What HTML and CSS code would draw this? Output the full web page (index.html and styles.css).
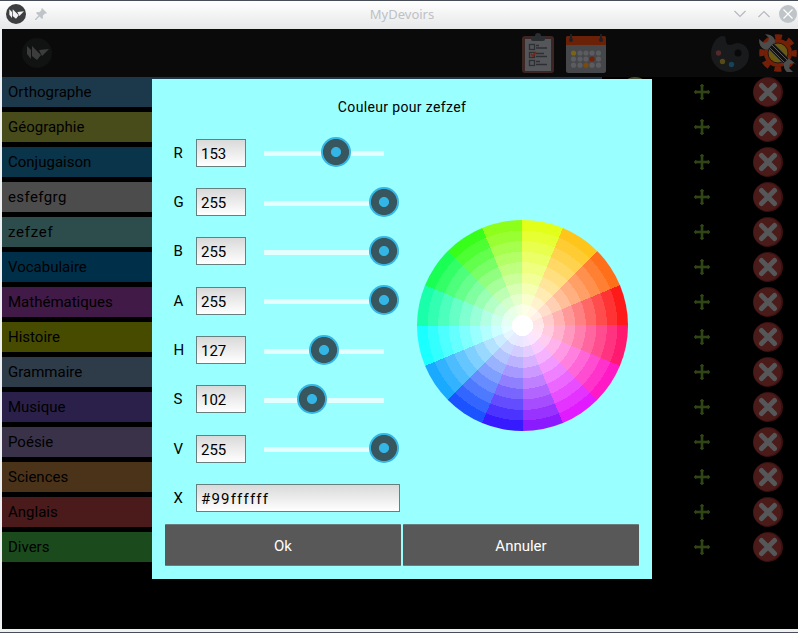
FILE: index.html
```
<!DOCTYPE html>
<html lang="fr">
<head>
<meta charset="utf-8">
<title>MyDevoirs</title>
<link rel="stylesheet" href="styles.css">
</head>
<body>
<svg class="defs" width="0" height="0">
  <defs>
    <symbol id="kivy" viewBox="0 0 30 30">
      <circle class="disc" cx="15" cy="15" r="15"/>
      <path class="bird" d="M5 8l4 4v9l-4-5zM10 8l9 9-4 5-5-4zM17 12l10-1-7 7z"/>
    </symbol>
    <symbol id="plus" viewBox="0 0 16 16">
      <path d="M7 2H6l2-2 2 2H9v5h5V6l2 2-2 2V9H9v5h1l-2 2-2-2h1V9H2v1L0 8l2-2v1h5z" fill="#304615" stroke="#304615" stroke-width=".6"/>
    </symbol>
    <symbol id="cross" viewBox="0 0 30 30">
      <circle cx="15" cy="15" r="15" fill="#3b1112"/>
      <circle cx="14.3" cy="15" r="13.9" fill="#4b1b1a"/>
      <path d="M8.500 8.500l13 13M21.500 8.500l-13 13" stroke="#555759" stroke-width="5" stroke-linecap="round"/>
    </symbol>
  </defs>
</svg>
<header class="titlebar">
  <svg class="app-icon" width="20" height="20"><use href="#kivy"/></svg>
  <svg class="pin" width="12" height="12" viewBox="0 0 12 12"><path d="M7 0l5 5-1 .7-1-.3-2.200 2.300.2 2.300-1 1L4.500 8.500 1 12H0v-1l3.500-3.500L1 5l1-1 2.300.2L6.600 2l-.3-1z" fill="#bfc4c8"/></svg>
  <h1>MyDevoirs</h1>
  <div class="controls">
    <svg width="12" height="8" viewBox="0 0 12 8"><path d="M.5 1L6 6.500 11.500 1"/></svg>
    <svg width="12" height="8" viewBox="0 0 12 8"><path d="M.5 7L6 1.500 11.500 7"/></svg>
    <svg width="18" height="18" viewBox="0 0 18 18"><circle cx="9" cy="9" r="9" fill="#bfc4c8" stroke="none"/><path d="M4.500 4.500l9 9M13.500 4.500l-9 9" class="close-x"/></svg>
  </div>
</header>
<main class="app">
  <nav class="toolbar">
    <svg class="logo" width="30" height="30"><use href="#kivy"/></svg>
    <svg class="todo" width="32" height="40" viewBox="0 0 32 40">
      <rect y="3" width="32" height="37" rx="3" fill="#3c2624"/><rect x="3" y="6" width="26" height="32" fill="#55565a"/>
      <path d="M9 3h4a3 3 0 0 1 6 0h4v3q0 2-2 2H11q-2 0-2-2z" fill="#2b2e30"/>
      <g fill="none" stroke="#2d3033" stroke-width="1.300"><rect x="7.500" y="11.500" width="5" height="5"/><rect x="7.500" y="19.500" width="5" height="5"/><rect x="7.500" y="27.500" width="5" height="5"/><path d="M14 12.500h3M14 15h11M14 20.500h8M14 23.500h11M14 28.500h4M14 31.500h11"/></g>
      <path d="M9 21l2 2 3-4" fill="none" stroke="#7a2412" stroke-width="1.600"/>
    </svg>
    <svg class="calendar" width="40" height="39" viewBox="0 0 40 39">
      <rect y="2" width="40" height="37" rx="2.500" fill="#45474a"/><path d="M0 11V4q0-2 2-2h36q2 0 2 2v7z" fill="#6b2108"/>
      <path d="M5 0v6M35 0v6" stroke="#1d2026" stroke-width="2"/><circle cx="5" cy="6" r="2" fill="#1d2026"/><circle cx="35" cy="6" r="2" fill="#1d2026"/>
      <g fill="#5a5c5f"><circle cx="14" cy="19" r="2.600"/><circle cx="20" cy="19" r="2.600"/><circle cx="26" cy="19" r="2.600"/><circle cx="32.500" cy="19" r="2.600"/><circle cx="7.500" cy="25" r="2.600"/><circle cx="14" cy="25" r="2.600"/><circle cx="20" cy="25" r="2.600"/><circle cx="32.500" cy="25" r="2.600"/><circle cx="7.500" cy="31.200" r="2.600"/><circle cx="14" cy="31.200" r="2.600"/><circle cx="26" cy="31.200" r="2.600"/><circle cx="32.500" cy="31.200" r="2.600"/></g>
      <circle cx="7.500" cy="19" r="2.600" fill="#7a6414"/><circle cx="26" cy="25" r="2.600" fill="#732108"/><circle cx="20" cy="31.200" r="2.600" fill="#7a4a10"/>
    </svg>
    <svg class="palette" width="38" height="36" viewBox="0 0 38 36">
      <path d="M12 0c4 0 2 5 4 8 2 2 6 0 10-1 7 0 12 5 12 12 0 10-9 17-19 17S0 28 0 18C0 8 6 0 12 0z" fill="#181a1b"/>
      <circle cx="27" cy="17" r="3.500" fill="#090909"/><circle cx="7.500" cy="17" r="2.700" fill="#532929"/><circle cx="11.500" cy="25.500" r="2.700" fill="#554a1a"/><circle cx="20.500" cy="28.500" r="2.700" fill="#174258"/>
    </svg>
    <svg class="settings" width="38" height="38" viewBox="0 0 38 38">
      <circle cx="19" cy="19" r="14" fill="#742008"/>
      <circle cx="19" cy="19" r="16.300" fill="none" stroke="#742008" stroke-width="5" stroke-dasharray="7 5.800" stroke-dashoffset="3.500"/>
      <circle cx="19" cy="19" r="10" fill="#6b5811" stroke="#241711" stroke-width="1"/>
      <path d="M8 8l22 22" stroke="#4c4c4c" stroke-width="8"/>
      <path d="M6 0l4 4-1 4-4 1-5-4q0 8 5 10 5 1 8-1l3-6q0-5-5-7zM38 31l-6-5q-5-1-7 3-1 6 3 9h6l-4-4 1-4 4-1z" fill="#4c4c4c"/>
      <path d="M12 12l15 15" stroke="#111" stroke-width="7"/><path d="M13 11l15 15M10.500 13.500l15 15" stroke="#585858" stroke-width="1"/>
    </svg>
  </nav>
  <ul class="subjects">
    <li><span class="name c1">Orthographe</span><i class="swatch"></i><svg class="add"><use href="#plus"/></svg><svg class="remove"><use href="#cross"/></svg></li>
    <li><span class="name c2">Géographie</span><i class="swatch"></i><svg class="add"><use href="#plus"/></svg><svg class="remove"><use href="#cross"/></svg></li>
    <li><span class="name c3">Conjugaison</span><i class="swatch"></i><svg class="add"><use href="#plus"/></svg><svg class="remove"><use href="#cross"/></svg></li>
    <li><span class="name c4">esfefgrg</span><i class="swatch"></i><svg class="add"><use href="#plus"/></svg><svg class="remove"><use href="#cross"/></svg></li>
    <li><span class="name c5">zefzef</span><i class="swatch"></i><svg class="add"><use href="#plus"/></svg><svg class="remove"><use href="#cross"/></svg></li>
    <li><span class="name c6">Vocabulaire</span><i class="swatch"></i><svg class="add"><use href="#plus"/></svg><svg class="remove"><use href="#cross"/></svg></li>
    <li><span class="name c7">Mathématiques</span><i class="swatch"></i><svg class="add"><use href="#plus"/></svg><svg class="remove"><use href="#cross"/></svg></li>
    <li><span class="name c8">Histoire</span><i class="swatch"></i><svg class="add"><use href="#plus"/></svg><svg class="remove"><use href="#cross"/></svg></li>
    <li><span class="name c9">Grammaire</span><i class="swatch"></i><svg class="add"><use href="#plus"/></svg><svg class="remove"><use href="#cross"/></svg></li>
    <li><span class="name c10">Musique</span><i class="swatch"></i><svg class="add"><use href="#plus"/></svg><svg class="remove"><use href="#cross"/></svg></li>
    <li><span class="name c11">Poésie</span><i class="swatch"></i><svg class="add"><use href="#plus"/></svg><svg class="remove"><use href="#cross"/></svg></li>
    <li><span class="name c12">Sciences</span><i class="swatch"></i><svg class="add"><use href="#plus"/></svg><svg class="remove"><use href="#cross"/></svg></li>
    <li><span class="name c13">Anglais</span><i class="swatch"></i><svg class="add"><use href="#plus"/></svg><svg class="remove"><use href="#cross"/></svg></li>
    <li><span class="name c14">Divers</span><i class="swatch"></i><svg class="add"><use href="#plus"/></svg><svg class="remove"><use href="#cross"/></svg></li>
  </ul>
</main>
<section class="dialog">
  <h2>Couleur pour zefzef</h2>
  <div class="picker">
    <div class="fields">
      <div class="field"><label>R</label><span class="value">153</span><div class="slider"><b style="left:60%"></b></div></div>
      <div class="field"><label>G</label><span class="value">255</span><div class="slider"><b style="left:100%"></b></div></div>
      <div class="field"><label>B</label><span class="value">255</span><div class="slider"><b style="left:100%"></b></div></div>
      <div class="field"><label>A</label><span class="value">255</span><div class="slider"><b style="left:100%"></b></div></div>
      <div class="field"><label>H</label><span class="value">127</span><div class="slider"><b style="left:50%"></b></div></div>
      <div class="field"><label>S</label><span class="value">102</span><div class="slider"><b style="left:40%"></b></div></div>
      <div class="field"><label>V</label><span class="value">255</span><div class="slider"><b style="left:100%"></b></div></div>
      <div class="field"><label>X</label><span class="value hex">#99ffffff</span></div>
    </div>
    <div class="wheel"></div>
  </div>
  <div class="actions"><button>Ok</button><button>Annuler</button></div>
</section>
</body>
</html>
```
FILE: styles.css
```
* { box-sizing: border-box; }
body {
  margin: 0;
  width: 798px;
  height: 633px;
  overflow: hidden;
  position: relative;
  display: flex;
  flex-direction: column;
  background: #eff0f1;
  border-top: 1px solid #474d59;
  border-bottom: 1px solid #474d59;
  font: 15px/30px Roboto, "Liberation Sans", sans-serif;
}
.defs { position: absolute; }
.titlebar {
  height: 28px;
  flex: none;
  display: flex;
  align-items: center;
  padding: 0 1px 2px 6px;
  background: linear-gradient(#fff, #e6e7e8);
}
.titlebar h1 {
  flex: 1;
  margin: 0 0 0 8px;
  padding-left: 15px;
  text-align: center;
  font: 13px/20px "Noto Sans", sans-serif;
  color: #bdc1c5;
}
.app-icon { --disc: #3c3e40; --bird: #f4f4f4; }
.pin { margin-left: 9px; }
.disc { fill: var(--disc); }
.bird { fill: var(--bird); }
.controls { display: flex; align-items: center; gap: 12px; }
.controls svg { fill: none; stroke: #b5babf; stroke-width: 1.2; }
.controls svg:last-child { margin-left: -3px; }
.controls .close-x { stroke: #fff; }
.app { margin-left: 2px; height: 600px; background: #000; }
.toolbar {
  height: 48px;
  display: flex;
  align-items: center;
  padding-left: 20px;
  background: #0a0a0a;
}
.logo { --disc: #111313; --bird: #3c3c3c; }
.todo { margin-left: 470px; }
.calendar { margin-left: 12px; }
.palette { margin-left: 105px; margin-top: 2px; }
.settings { margin-left: 10px; flex: none; }
.subjects {
  list-style: none;
  margin: 0;
  padding: 0;
  display: flex;
  flex-direction: column;
  gap: 5px;
}
.subjects li { display: flex; align-items: center; height: 30px; }
.name { width: 600px; height: 30px; padding-left: 6px; flex: none; color: #000; }
.c1 { background: #1c394b; }
.c2 { background: #484b1a; }
.c3 { background: #0a3449; }
.c4 { background: #4c4c4c; letter-spacing: .4px; }
.c5 { background: #2d4c4c; letter-spacing: .75px; }
.c6 { background: #003049; }
.c7 { background: #411a48; }
.c8 { background: #464b00; }
.c9 { background: #2e3b48; }
.c10 { background: #2a2049; }
.c11 { background: #393249; }
.c12 { background: #4b331a; }
.c13 { background: #4b1a1b; }
.c14 { background: #1b4b1c; }
.swatch { width: 30px; height: 30px; margin-left: 18px; border-radius: 50%; background: #455039; }
.add { width: 16px; height: 16px; margin-left: 44px; }
.remove { width: 30px; height: 30px; margin-left: 43px; }
.dialog {
  position: absolute;
  left: 152px;
  top: 78px;
  width: 500px;
  height: 500px;
  padding: 12px 13px;
  background: #9ff;
}
.dialog h2 { margin: 0; height: 36px; font: 14px/33px Roboto, sans-serif; letter-spacing: .35px; text-align: center; }
.picker { display: flex; height: 396px; }
.fields { display: flex; flex-direction: column; width: 252px; }
.field { height: 49.35px; display: flex; align-items: center; }
.field label { width: 31px; padding: 2px 0 0 8.5px; }
.value {
  width: 50px;
  height: 28px;
  margin-top: 2px;
  padding-left: 4px;
  line-height: 28px;
  border: 1px solid #668080;
  background: linear-gradient(#d9d9d9, #fff);
}
.value.hex { width: 204px; letter-spacing: 1.2px; }
.slider { position: relative; width: 120px; height: 5px; margin: 4px 0 0 18px; background: #e3ffff; }
.slider b {
  position: absolute;
  top: -14px;
  width: 30px;
  height: 30px;
  margin-left: -15.5px;
  border-radius: 50%;
  background: radial-gradient(circle, #33b5e5 4.6px, #37565d 5.4px 12.6px, #33b5e5 13.4px);
}
.wheel {
  width: 211px;
  height: 211px;
  margin-top: 93px;
  border-radius: 50%;
  background:
    radial-gradient(circle at center,
      #fff 10.55px, rgb(255 255 255 / .9) 10.55px 21.1px, rgb(255 255 255 / .8) 21.1px 31.65px,
      rgb(255 255 255 / .7) 31.65px 42.2px, rgb(255 255 255 / .6) 42.2px 52.75px,
      rgb(255 255 255 / .5) 52.75px 63.3px, rgb(255 255 255 / .4) 63.3px 73.85px,
      rgb(255 255 255 / .3) 73.85px 84.4px, rgb(255 255 255 / .2) 84.4px 94.95px,
      rgb(255 255 255 / .1) 94.95px),
    conic-gradient(
      hsl(67.5 100% 50%) 22.5deg, hsl(45 100% 50%) 22.5deg 45deg,
      hsl(22.5 100% 50%) 45deg 67.5deg, hsl(0 100% 50%) 67.5deg 90deg,
      hsl(337.5 100% 50%) 90deg 112.5deg, hsl(315 100% 50%) 112.5deg 135deg,
      hsl(292.5 100% 50%) 135deg 157.5deg, hsl(270 100% 50%) 157.5deg 180deg,
      hsl(247.5 100% 50%) 180deg 202.5deg, hsl(225 100% 50%) 202.5deg 225deg,
      hsl(202.5 100% 50%) 225deg 247.5deg, hsl(180 100% 50%) 247.5deg 270deg,
      hsl(157.5 100% 50%) 270deg 292.5deg, hsl(135 100% 50%) 292.5deg 315deg,
      hsl(112.5 100% 50%) 315deg 337.5deg, hsl(90 100% 50%) 337.5deg);
}
.actions { display: flex; gap: 2px; margin-top: 1px; }
.actions button {
  flex: 1;
  height: 42px;
  padding: 2px 0 0;
  border: 0;
  border-top: 1px solid #6b7c7c;
  border-bottom: 1px solid #6b7c7c;
  border-radius: 1px;
  background: #585858;
  color: #fff;
  font: 15px/38px Roboto, sans-serif;
}
```
